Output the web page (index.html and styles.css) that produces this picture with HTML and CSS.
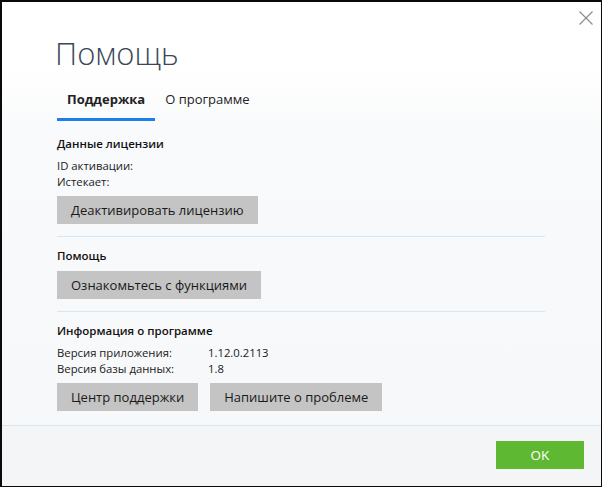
FILE: index.html
```html
<!DOCTYPE html>
<html lang="ru">
<head>
<meta charset="utf-8">
<link rel="stylesheet" href="styles.css">
</head>
<body>
<div class="window">
  <button class="close" aria-label="Закрыть">
    <svg width="16" height="16" viewBox="0 0 16 16"><path d="M1.5 1.5 L14.5 14.5 M14.5 1.5 L1.5 14.5" stroke="#8a8a8a" stroke-width="1.1" fill="none"/></svg>
  </button>
  <header class="header">
    <h1 class="title">Помощь</h1>
    <nav class="tabs">
      <span class="tab active">Поддержка</span>
      <span class="tab">О программе</span>
    </nav>
  </header>
  <main class="content">
    <section class="section">
      <h2 class="section-title">Данные лицензии</h2>
      <div class="lines">
        <div>ID активации:</div>
        <div>Истекает:</div>
      </div>
      <div class="buttons"><button class="btn">Деактивировать лицензию</button></div>
    </section>
    <section class="section">
      <h2 class="section-title">Помощь</h2>
      <div class="buttons"><button class="btn">Ознакомьтесь с функциями</button></div>
    </section>
    <section class="section last">
      <h2 class="section-title">Информация о программе</h2>
      <div class="info">
        <span>Версия приложения:</span><span>1.12.0.2113</span>
        <span>Версия базы данных:</span><span>1.8</span>
      </div>
      <div class="buttons">
        <button class="btn">Центр поддержки</button>
        <button class="btn">Напишите о проблеме</button>
      </div>
    </section>
  </main>
  <footer class="footer">
    <button class="ok">OK</button>
  </footer>
</div>
</body>
</html>
```
FILE: styles.css
```css
html, body { margin: 0; padding: 0; }
body { font-family: "Segoe UI", "Open Sans", "Noto Sans", sans-serif; color: #1a1a1a; }
.window {
  width: 602px; height: 487px; box-sizing: border-box;
  border-style: solid; border-color: #0a0a0a;
  border-width: 2px 1px 1px 2px;
  background: linear-gradient(#ffffff 0, #ffffff 68px, #f9fafb 125px, #f7f8f9 420px);
  display: flex; flex-direction: column; position: relative; overflow: hidden;
}
.close {
  position: absolute; top: 8px; right: 7px; width: 16px; height: 16px;
  padding: 0; border: 0; background: none; display: flex;
}
.header { padding: 29px 0 0 53px; }
.title {
  margin: 0; font-weight: 300; font-size: 31px; line-height: 44px; color: #3a4756;
}
.tabs { display: flex; margin: 9px 0 0 2px; }
.tab {
  font-size: 13px; line-height: 18px; padding: 6px 10px 10px; color: #222;
  border-bottom: 3px solid transparent;
}
.tab.active { font-weight: 700; border-bottom-color: #1a7fea; }
.content { padding: 4px 56px 0 55px; flex: 1; }
.section { border-bottom: 1px solid #d5e6f5; padding: 10px 0 12px; }
.section.last { border-bottom: 0; }
.section-title { margin: 0 0 5px; font-size: 11.5px; line-height: 18px; font-weight: 600; color: #111; }
.lines div, .info span { font-size: 11.3px; line-height: 16px; color: #1a1a1a; }
.info { display: grid; grid-template-columns: 151px auto; }
.buttons { display: flex; gap: 12px; margin-top: 6px; }
.btn {
  font-family: inherit; font-size: 13px; color: #1a1a1a; background: #c4c4c4;
  border: 0; height: 28px; padding: 0 14px; line-height: 28px;
}
.footer {
  border-top: 1px solid #d5e6f5; height: 61px; box-sizing: border-box;
  background: #f4f5f7; display: flex; justify-content: flex-end; align-items: flex-start;
  padding: 15px 17px 0 0;
}
.ok {
  font-family: inherit; font-size: 13.5px; color: #fff; background: #5fb832;
  border: 0; width: 88px; height: 28px;
}
```
